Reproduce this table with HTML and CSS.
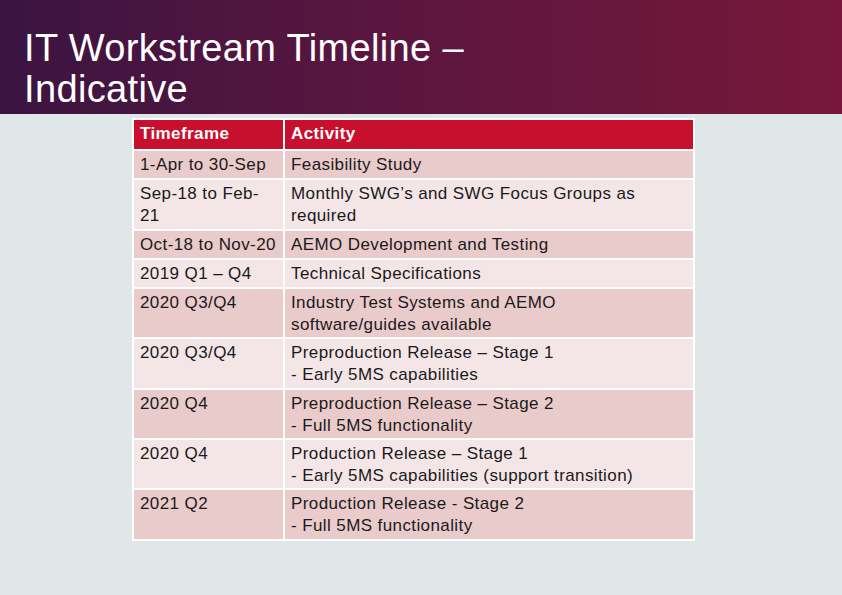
FILE: index.html
```html
<!DOCTYPE html>
<html>
<head>
<meta charset="utf-8">
<link rel="stylesheet" href="styles.css">
</head>
<body>
<div class="slide">
  <header class="banner">
    <h1 class="title">IT Workstream Timeline –<br>Indicative</h1>
  </header>
  <main class="content">
    <table class="timeline">
      <thead>
        <tr><th class="c1">Timeframe</th><th>Activity</th></tr>
      </thead>
      <tbody>
        <tr class="dark h1"><td>1-Apr to 30-Sep</td><td>Feasibility Study</td></tr>
        <tr class="light h2b"><td>Sep-18 to Feb-<br>21</td><td>Monthly SWG’s and SWG Focus Groups as<br>required</td></tr>
        <tr class="dark h1"><td>Oct-18 to Nov-20</td><td>AEMO Development and Testing</td></tr>
        <tr class="light h1"><td>2019 Q1 – Q4</td><td>Technical Specifications</td></tr>
        <tr class="dark h2"><td>2020 Q3/Q4</td><td>Industry Test Systems and AEMO<br>software/guides available</td></tr>
        <tr class="light h2b"><td>2020 Q3/Q4</td><td>Preproduction Release – Stage 1<br>- Early 5MS capabilities</td></tr>
        <tr class="dark h2"><td>2020 Q4</td><td>Preproduction Release – Stage 2<br>- Full 5MS functionality</td></tr>
        <tr class="light h2"><td>2020 Q4</td><td>Production Release – Stage 1<br>- Early 5MS capabilities (support transition)</td></tr>
        <tr class="dark h2b"><td>2021 Q2</td><td>Production Release - Stage 2<br>- Full 5MS functionality</td></tr>
      </tbody>
    </table>
  </main>
</div>
</body>
</html>
```

FILE: styles.css
```css
html, body {
  margin: 0;
  padding: 0;
}
body {
  width: 842px;
  height: 595px;
  overflow: hidden;
  background: #e0e7e9;
  font-family: "Liberation Sans", Arial, sans-serif;
}
.slide {
  display: flex;
  flex-direction: column;
  height: 595px;
}
.banner {
  height: 114px;
  background: linear-gradient(90deg, #3b1441 0%, #5a163f 45%, #77183a 100%);
  box-sizing: border-box;
  padding: 28px 0 0 24px;
}
.title {
  margin: 0;
  color: #ffffff;
  font-weight: normal;
  font-size: 38px;
  line-height: 41px;
  letter-spacing: 0.35px;
}
.content {
  padding: 4px 0 0 132px;
}
.timeline {
  border-collapse: collapse;
  width: 563px;
  font-size: 17px;
  line-height: 22px;
  letter-spacing: 0.4px;
  color: #1a1a1a;
}
.timeline th, .timeline td {
  border: 2px solid #ffffff;
  text-align: left;
  vertical-align: top;
  padding: 3px 6px 1px 6px;
}
.timeline th {
  background: #c8102e;
  color: #ffffff;
  font-weight: bold;
  height: 25px;
}
.timeline .c1 {
  width: 137px;
}
.timeline tr.dark td {
  background: #eacbcc;
}
.timeline tr.light td {
  background: #f4e6e7;
}
.timeline tr.h1 td {
  height: 23px;
}
.timeline tr.h2 td {
  height: 44px;
}
.timeline tr.h2b td {
  height: 45px;
}
```
